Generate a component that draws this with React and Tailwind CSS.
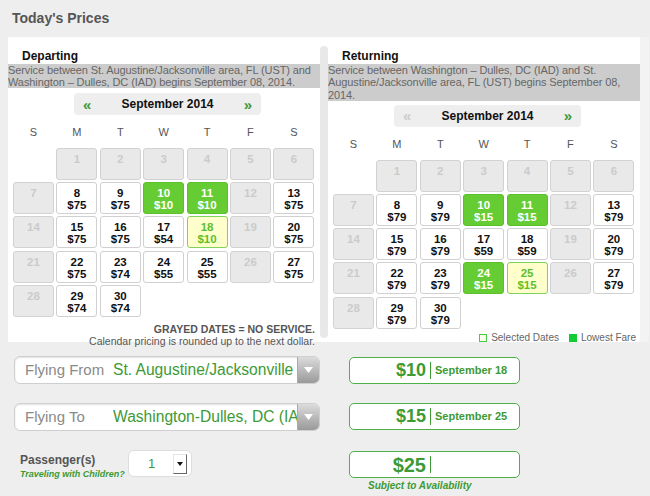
import React from "react";

const G = "text-[#3d9a35]";

function Cell({ c }) {
  if (!c) return <div />;
  const [d, p, t] = c;
  if (t === "x")
    return (
      <div className="h-[32px] rounded-[3px] border border-[#d2d2d2] bg-[#e9e9e9] text-center text-[11.5px] font-bold leading-[12px] pt-[4px] text-[#cbcbcb]">
        {d}
      </div>
    );
  let cls = "bg-white border-[#d0d0d0] text-[#111]";
  if (t === "l") cls = "bg-[#66cc33] border-[#5cbf2c] text-white";
  if (t === "s") cls = "bg-[#ffffcc] border-[#7fd35a] text-[#5cbf2c]";
  return (
    <div className={`h-[32px] rounded-[3px] border text-center text-[11.5px] font-bold leading-[12px] pt-[4px] ${cls}`}>
      <div>{d}</div>
      <div>{p}</div>
    </div>
  );
}

function Calendar({ cells, prevDisabled, gridMl }) {
  return (
    <>
      <div className="ml-[66px] w-[187px] h-[22px] rounded-[4px] bg-[#eeeeee] flex items-center justify-between px-[9px]">
        <span className={`text-[15px] font-bold leading-none ${prevDisabled ? "text-[#cccccc]" : "text-[#3d9a35]"}`}>«</span>
        <span className="text-[12px] font-bold text-[#111]">September 2014</span>
        <span className="text-[15px] font-bold leading-none text-[#3d9a35]">»</span>
      </div>
      <div className={`${gridMl} mt-[10px] grid grid-cols-[repeat(7,41px)] gap-x-[2.4px] text-[11px] text-[#555] h-[14px] leading-[14px]`}>
        {["S", "M", "T", "W", "T", "F", "S"].map((d, i) => (
          <div key={i} className="text-center">{d}</div>
        ))}
      </div>
      <div className={`${gridMl} mt-[9px] grid grid-cols-[repeat(7,41px)] auto-rows-[32px] gap-x-[2.4px] gap-y-[2.2px]`}>
        {cells.map((c, i) => (
          <Cell key={i} c={c} />
        ))}
      </div>
    </>
  );
}

function build(prices) {
  const cells = [null];
  for (let d = 1; d <= 30; d++) {
    const dow = d % 7;
    if (d <= 6 || dow === 0 || dow === 5) cells.push([d, "", "x"]);
    else cells.push([d, prices[d][0], prices[d][1] || ""]);
  }
  return cells;
}

const dep = build({
  8: ["$75"], 9: ["$75"], 10: ["$10", "l"], 11: ["$10", "l"], 13: ["$75"],
  15: ["$75"], 16: ["$75"], 17: ["$54"], 18: ["$10", "s"], 20: ["$75"],
  22: ["$75"], 23: ["$74"], 24: ["$55"], 25: ["$55"], 27: ["$75"],
  29: ["$74"], 30: ["$74"],
});
const ret = build({
  8: ["$79"], 9: ["$79"], 10: ["$15", "l"], 11: ["$15", "l"], 13: ["$79"],
  15: ["$79"], 16: ["$79"], 17: ["$59"], 18: ["$59"], 20: ["$79"],
  22: ["$79"], 23: ["$79"], 24: ["$15", "l"], 25: ["$15", "s"], 27: ["$79"],
  29: ["$79"], 30: ["$79"],
});

function Select({ label, value }) {
  return (
    <div className="h-[28px] flex rounded-[6px] border border-[#cfcfcf] bg-white shadow-[inset_0_1px_2px_rgba(0,0,0,0.12)] overflow-hidden">
      <div className="w-[98px] shrink-0 pl-[10px] whitespace-nowrap text-[15px] leading-[26px] text-[#8a8a8a]">{label}</div>
      <div className={`flex-1 overflow-hidden whitespace-nowrap text-[15.6px] leading-[26px] ${G}`}>{value}</div>
      <div className="w-[22px] shrink-0 bg-gradient-to-b from-[#dcdcdc] to-[#9a9a9a] flex items-center justify-center border-l border-[#aaa]">
        <svg width="9" height="6" viewBox="0 0 9 6"><path d="M0 0H9L4.5 6Z" fill="#fff" /></svg>
      </div>
    </div>
  );
}

function PriceBox({ price, date, big }) {
  return (
    <div className="h-[27px] rounded-[5px] border-[1.5px] border-[#4fb04a] bg-white flex items-center">
      <div className={`w-[76px] text-right font-bold ${G} ${big ? "text-[20px]" : "text-[18px]"}`}>{price}</div>
      <div className="w-[1px] h-[17px] bg-[#3d9a35] ml-[4px] mr-[4px]" />
      <div className={`text-[11px] font-bold ${G}`}>{date}</div>
    </div>
  );
}

export default function App() {
  return (
    <div className="w-[650px] h-[496px] overflow-hidden bg-[#eeeeee] font-['Liberation_Sans',Arial,sans-serif]">
      <div className="h-[37px] pl-[12px] pt-[9px] text-[14px] font-bold text-[#555] leading-[18px]">Today's Prices</div>
      <div className="flex ml-[8px] h-[305px]">
        <div className="w-[320px] bg-white flex">
          <div className="w-[312px]">
            <div className="pl-[14px] pt-[11px] text-[12px] font-bold leading-[16px] text-[#111]">Departing</div>
            <div className="bg-[#cccccc] text-[11px] tracking-[-0.1px] leading-[12px] text-[#666]">
              Service between St. Augustine/Jacksonville area, FL (UST) and Washington – Dulles, DC (IAD) begins September 08, 2014.
            </div>
            <div className="mt-[5px]" />
            <Calendar cells={dep} gridMl="ml-[5px]" />
            <div className="pr-[5px] mt-[6px] text-right text-[10.5px] leading-[12px] text-[#555]">
              <div className="font-bold">GRAYED DATES = NO SERVICE.</div>
              <div>Calendar pricing is rounded up to the next dollar.</div>
            </div>
          </div>
          <div className="w-[8px] mt-[9px] mb-[4px] rounded-full bg-[#e8e8e8]" />
        </div>
        <div className="w-[312px] bg-white">
          <div className="pl-[14px] pt-[11px] text-[12px] font-bold leading-[16px] text-[#111]">Returning</div>
          <div className="bg-[#cccccc] text-[11px] tracking-[-0.1px] leading-[12.3px] text-[#666] pr-[14px]">
            Service between Washington – Dulles, DC (IAD) and St. Augustine/Jacksonville area, FL (UST) begins September 08, 2014.
          </div>
          <div className="mt-[4px]" />
          <Calendar cells={ret} prevDisabled gridMl="ml-[5px]" />
          <div className="mt-[3px] pr-[4px] flex justify-end items-center gap-[4px] text-[10px] leading-[12px] text-[#666]">
            <div className="w-[8px] h-[8px] border border-[#44cc44] bg-[#ffffee]" />
            <span className="mr-[6px]">Selected Dates</span>
            <div className="w-[8px] h-[8px] bg-[#11cc33]" />
            <span>Lowest Fare</span>
          </div>
        </div>
        <div className="w-[9px] bg-[#f3f3f3]" />
      </div>
      <div className="flex">
        <div className="ml-[14px] w-[306px]">
          <div className="mt-[14px]">
            <Select label="Flying From" value="St. Augustine/Jacksonville" />
          </div>
          <div className="mt-[19px]">
            <Select label="Flying To" value="Washington-Dulles, DC (IAD)" />
          </div>
          <div className="mt-[19px] flex">
            <div className="w-[114px] pl-[6px] pt-[3px]">
              <div className="text-[12px] font-bold leading-[14px] text-[#555]">Passenger(s)</div>
              <div className={`text-[9px] font-bold italic leading-[11px] mt-[2px] ${G}`}>Traveling with Children?</div>
            </div>
            <div className="w-[64px] h-[27px] rounded-[6px] border border-[#dddddd] bg-white flex items-center">
              <span className={`ml-[19px] w-[25px] text-[13px] ${G}`}>1</span>
              <div className="w-[14px] h-[20px] bg-white border border-[#e4e4e4] border-r-[#666] border-b-[#666] flex items-center justify-center">
                <svg width="6" height="4" viewBox="0 0 6 4"><path d="M0 0H6L3 4Z" fill="#111" /></svg>
              </div>
            </div>
          </div>
        </div>
        <div className="ml-[29px] w-[171px]">
          <div className="mt-[15px]">
            <PriceBox price="$10" date="September 18" />
          </div>
          <div className="mt-[19px]">
            <PriceBox price="$15" date="September 25" />
          </div>
          <div className="mt-[21px]">
            <PriceBox price="$25" date="" big />
          </div>
          <div className={`pl-[19px] mt-[2px] text-[10px] font-bold italic leading-[12px] ${G}`}>Subject to Availability</div>
        </div>
      </div>
    </div>
  );
}
